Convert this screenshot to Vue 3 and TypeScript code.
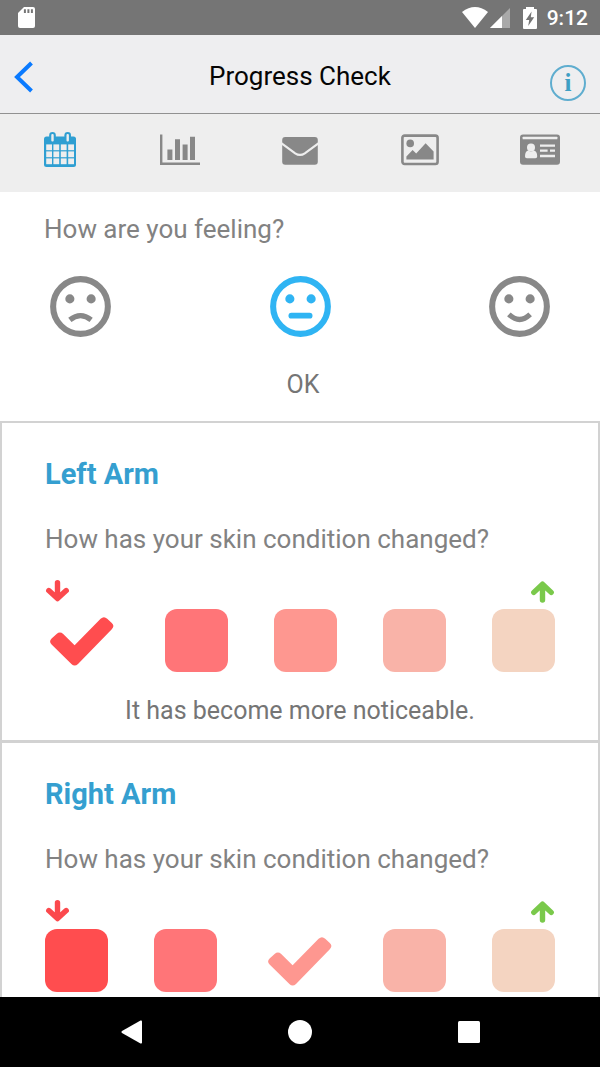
<script setup lang="ts">
import { ref } from 'vue'

interface Area {
  id: string
  name: string
  selected: number
  result?: string
}

const tabs = ['Calendar', 'Charts', 'Messages', 'Photos', 'Profile']
const activeTab = ref(0)

const moods = ['Bad', 'OK', 'Good']
const mood = ref(1)

const shades = ['#ff4d4f', '#ff7578', '#fe9790', '#f9b3a8', '#f4d4c1']

const areas = ref<Area[]>([
  { id: 'left-arm', name: 'Left Arm', selected: 0, result: 'It has become more noticeable.' },
  { id: 'right-arm', name: 'Right Arm', selected: 2 },
])
</script>

<template>
  <div class="screen">
    <div class="status">
      <svg class="sd" viewBox="0 0 17 21" aria-hidden="true">
        <path d="M6 0H15Q17 0 17 2V19Q17 21 15 21H2Q0 21 0 19V6Z" fill="#fff" />
        <path d="M6.9 2.2V6M10.4 2.2V6M13.9 2.2V6" stroke="#757575" stroke-width="2" />
      </svg>
      <div class="status-right">
        <svg class="wifi" viewBox="0 0 26 21" aria-hidden="true">
          <path d="M0 5Q13-5 26 5L13 21Z" fill="#fff" />
        </svg>
        <svg class="signal" viewBox="0 0 20 20" aria-hidden="true">
          <path d="M20 0V20H0Z" fill="#a9a9a9" />
          <path d="M12 8V20H0Z" fill="#fff" />
        </svg>
        <svg class="battery" viewBox="0 0 14 22" aria-hidden="true">
          <path d="M3 0H11V2H13Q14 2 14 3V21Q14 22 13 22H1Q0 22 0 21V3Q0 2 1 2H3Z" fill="#fff" />
          <path d="M8.6 4.6L2.8 13H6.2L5.2 19L11.2 10.2H7.8Z" fill="#757575" />
        </svg>
        <time class="clock">9:12</time>
      </div>
    </div>

    <header class="header">
      <button class="back" type="button" aria-label="Back">
        <svg viewBox="0 0 20 32" aria-hidden="true">
          <path d="M17.5 2L3 16L17.5 30" fill="none" stroke="#0a7aff" stroke-width="4" />
        </svg>
      </button>
      <h1 class="title">Progress Check</h1>
      <button class="info" type="button" aria-label="Information">i</button>
    </header>

    <nav class="tabs">
      <button
        v-for="(tab, i) in tabs"
        :key="tab"
        class="tab"
        :class="{ active: activeTab === i }"
        type="button"
        :aria-label="tab"
        @click="activeTab = i"
      >
        <svg viewBox="0 0 40 36" aria-hidden="true">
          <g v-if="i === 0">
            <rect x="4" y="4.5" width="32" height="30.5" rx="2.5" fill="currentColor" />
            <g class="cut">
              <template v-for="y in [12.4, 19.4, 26.4]" :key="y">
                <rect v-for="x in [6.2, 13.4, 20.8, 28.2]" :key="x" :x="x" :y="y" width="5.8" height="5.8" />
              </template>
            </g>
            <rect x="9.2" y="0" width="6.6" height="10.6" rx="3.3" fill="currentColor" />
            <rect x="24.4" y="0" width="6.6" height="10.6" rx="3.3" fill="currentColor" />
            <rect class="cut" x="11.3" y="2" width="2.4" height="7.6" rx="1" />
            <rect class="cut" x="26.5" y="2" width="2.4" height="7.6" rx="1" />
          </g>
          <g v-else-if="i === 1" fill="currentColor">
            <path d="M0 2.4H2.4V30.4H40V33H0Z" />
            <path d="M7.4 17.6H12.4V28H7.4ZM15 7.2H20V28H15ZM22.6 12.4H27.6V28H22.6ZM30 4.8H35V28H30Z" />
          </g>
          <g v-else-if="i === 2">
            <rect x="2.2" y="5" width="35.6" height="27.8" rx="3" fill="currentColor" />
            <path class="cut-line" d="M1.6 11.4L15.2 21.3Q20 24.6 24.8 21.3L38.4 11.4" />
          </g>
          <g v-else-if="i === 3">
            <rect x="2.4" y="3.6" width="35.2" height="28.4" rx="2.2" fill="none" stroke="currentColor" stroke-width="2.6" />
            <circle cx="10.2" cy="11.4" r="3.8" fill="currentColor" />
            <path d="M6.4 27.6V24.6L12.6 18L16.2 21.4L25.6 11.2L33.6 19.4V27.6Z" fill="currentColor" />
          </g>
          <g v-else>
            <rect x="0" y="2.4" width="40" height="30.4" rx="3" fill="currentColor" />
            <g class="cut">
              <rect x="2.6" y="4.8" width="34.8" height="2.4" rx="0.5" />
              <circle cx="11" cy="15.4" r="4" />
              <path d="M5 24.5Q5 18.6 8.4 18.4Q11 20.4 13.6 18.4Q17.2 18.6 17.2 24.5Q17.2 26.2 15.4 26.2H6.8Q5 26.2 5 24.5Z" />
              <path d="M20 12.4H35V14.8H20ZM20 17.6H27.6V19.8H20ZM30 17.6H35V19.8H30ZM20 22.8H35V25.2H20Z" />
            </g>
          </g>
        </svg>
      </button>
    </nav>

    <main class="content">
      <fieldset class="feeling">
        <legend class="question">How are you feeling?</legend>
        <div class="moods">
          <label v-for="(label, i) in moods" :key="label" class="mood" :class="{ picked: mood === i }">
            <input v-model="mood" class="cover" type="radio" name="mood" :value="i" :aria-label="label" />
            <svg viewBox="0 0 24 24" fill="none" stroke="currentColor" aria-hidden="true">
              <circle cx="12" cy="12" r="9" stroke-width="2" />
              <circle cx="8.5" cy="9.5" r="1.5" fill="currentColor" stroke="none" />
              <circle cx="15.5" cy="9.5" r="1.5" fill="currentColor" stroke="none" />
              <path v-if="i === 0" d="M8.5 16.4Q12 13.6 15.5 16.4" stroke-width="1.7" />
              <path v-else-if="i === 1" d="M9 15H15" stroke-width="1.9" stroke-linecap="round" />
              <path v-else d="M8.5 14.6Q12 17.9 15.5 14.6" stroke-width="1.7" />
            </svg>
          </label>
        </div>
        <p class="mood-name">{{ moods[mood] }}</p>
      </fieldset>

      <section v-for="area in areas" :key="area.id" class="card">
        <h2 class="area">{{ area.name }}</h2>
        <p :id="area.id" class="question">How has your skin condition changed?</p>
        <div class="arrows">
          <svg class="worse" viewBox="0 0 24 24" aria-hidden="true">
            <path d="M12.5 3.6V18M3.8 11.6L12.5 19.6L21.2 11.6" />
          </svg>
          <svg class="better" viewBox="0 0 24 24" aria-hidden="true">
            <path d="M11.5 21V6.4M2.8 13.4L11.5 5.2L20.2 13.4" />
          </svg>
        </div>
        <div class="scale" role="radiogroup" :aria-labelledby="area.id">
          <label v-for="(shade, i) in shades" :key="shade" class="step" :style="{ color: shade }">
            <input
              v-model="area.selected"
              class="cover"
              type="radio"
              :name="area.id"
              :value="i"
              :aria-label="`Level ${i + 1} of 5`"
            />
            <svg v-if="area.selected === i" class="check" viewBox="0 0 74 63" aria-hidden="true">
              <path
                d="M6.6 29.6L11.6 25Q15 22.2 18.2 25L29.6 36.2L55.6 9.8Q59 6.6 62.2 9.8L66.8 14Q70 17 66.8 20.2L33 55Q29.6 58 26.4 55L6.6 35.6Q3.6 32.6 6.6 29.6Z"
                fill="currentColor"
              />
            </svg>
            <span v-else class="swatch"></span>
          </label>
        </div>
        <p v-if="area.result" class="result">{{ area.result }}</p>
      </section>
    </main>

    <nav class="system">
      <button type="button" aria-label="System back">
        <svg viewBox="0 0 24 24" aria-hidden="true">
          <path d="M20.5 .6Q22 0 22 1.6V22.4Q22 24 20.5 23.4L2 13Q.6 12 2 11Z" fill="#fff" />
        </svg>
      </button>
      <button type="button" aria-label="Home">
        <svg viewBox="0 0 24 24" aria-hidden="true"><circle cx="12" cy="12" r="12" fill="#fff" /></svg>
      </button>
      <button type="button" aria-label="Recent apps">
        <svg viewBox="0 0 24 24" aria-hidden="true"><rect x="2" y="1" width="22" height="22" rx="1.5" fill="#fff" /></svg>
      </button>
    </nav>
  </div>
</template>

<style>
body {
  margin: 0;
}
</style>

<style scoped>
.screen {
  display: flex;
  flex-direction: column;
  height: 100vh;
  background: #fff;
  color: #7d7d7d;
  font-family: Roboto, "Noto Sans", sans-serif;
}

button {
  display: flex;
  align-items: center;
  justify-content: center;
  margin: 0;
  padding: 0;
  border: 0;
  background: none;
  font: inherit;
  cursor: pointer;
}

svg {
  display: block;
}

h1,
h2,
p {
  margin: 0;
}

.status {
  display: flex;
  flex: none;
  align-items: center;
  justify-content: space-between;
  height: 35px;
  padding: 0 12px 0 18px;
  background: #757575;
}

.sd {
  width: 17px;
  height: 21px;
}

.status-right {
  display: flex;
  align-items: center;
}

.wifi {
  width: 26px;
  height: 21px;
}

.signal {
  width: 20px;
  height: 20px;
  margin-left: 2px;
}

.battery {
  width: 14px;
  height: 22px;
  margin-left: 13px;
}

.clock {
  margin-left: 10px;
  color: #fff;
  font-size: 21px;
  font-weight: 500;
  line-height: 24px;
}

.header {
  display: grid;
  flex: none;
  grid-template-columns: 1fr auto 1fr;
  align-items: center;
  padding: 22px 14px 12px;
  border-bottom: 1px solid #919191;
  background: #eeeef0;
}

.back {
  align-self: start;
  justify-self: start;
  padding-top: 4px;
}

.back svg {
  width: 20px;
  height: 32px;
}

.title {
  align-self: start;
  padding-top: 4px;
  color: #050505;
  font-size: 26px;
  font-weight: 400;
  line-height: 30px;
}

.info {
  align-self: end;
  justify-self: end;
  box-sizing: border-box;
  width: 36px;
  height: 36px;
  margin-top: 8px;
  border: 2px solid #5fadcf;
  border-radius: 50%;
  color: #3e9fc4;
  font-family: "Liberation Serif", serif;
  font-size: 25px;
  font-weight: 700;
  line-height: 32px;
}

.tabs {
  display: flex;
  flex: none;
  padding: 18px 0 24px;
  background: #eee;
}

.tab {
  flex: 1;
  color: #888;
}

.tab.active {
  color: #2f9fd2;
}

.tab svg {
  width: 40px;
  height: 36px;
}

.cut {
  fill: #eee;
}

.cut-line {
  fill: none;
  stroke: #eee;
  stroke-width: 2.2;
}

.content {
  flex: 1;
  min-height: 0;
  overflow-y: auto;
  scrollbar-width: none;
}

.feeling {
  min-width: 0;
  margin: 0;
  padding: 22px 44px 21px;
  border: 0;
}

.question {
  padding: 0;
  color: #828282;
  font-size: 26px;
  line-height: 30px;
}

.feeling .question {
  float: left;
  width: 100%;
}

.moods {
  display: flex;
  clear: both;
  justify-content: space-between;
  padding-top: 26px;
}

.mood,
.step {
  position: relative;
  display: block;
  cursor: pointer;
}

.mood {
  color: #888;
}

.mood.picked {
  color: #2fb4f3;
}

.mood svg {
  width: 73px;
  height: 73px;
}

.cover {
  position: absolute;
  inset: 0;
  width: 100%;
  height: 100%;
  margin: 0;
  opacity: 0;
  cursor: pointer;
}

.mood-name {
  padding: 27px 0 0 6px;
  color: #757575;
  font-size: 25px;
  line-height: 30px;
  text-align: center;
}

.card {
  padding: 34px 43px 14px;
  border: 2px solid #d2d2d2;
  border-bottom-width: 1px;
}

.area {
  color: #359fd0;
  font-size: 29px;
  font-weight: 700;
  line-height: 34px;
}

.card .question {
  margin-top: 33px;
}

.arrows {
  display: flex;
  justify-content: space-between;
  margin-top: 25px;
}

.arrows svg {
  width: 24px;
  height: 24px;
  fill: none;
  stroke-width: 5.4;
  stroke-linecap: round;
  stroke-linejoin: round;
}

.worse {
  stroke: #fb494d;
}

.better {
  stroke: #7ac94b;
}

.scale {
  display: flex;
  justify-content: space-between;
  margin-top: 6px;
}

.swatch {
  display: block;
  width: 63px;
  height: 63px;
  border-radius: 12px;
  background: currentColor;
}

.check {
  width: 74px;
  height: 63px;
}

.result {
  margin-top: 24px;
  color: #757575;
  font-size: 25px;
  line-height: 30px;
  text-align: center;
}

.system {
  display: flex;
  flex: none;
  padding: 0 48px;
  background: #000;
}

.system button {
  flex: 1;
  height: 70px;
}

.system svg {
  width: 24px;
  height: 24px;
}
</style>
